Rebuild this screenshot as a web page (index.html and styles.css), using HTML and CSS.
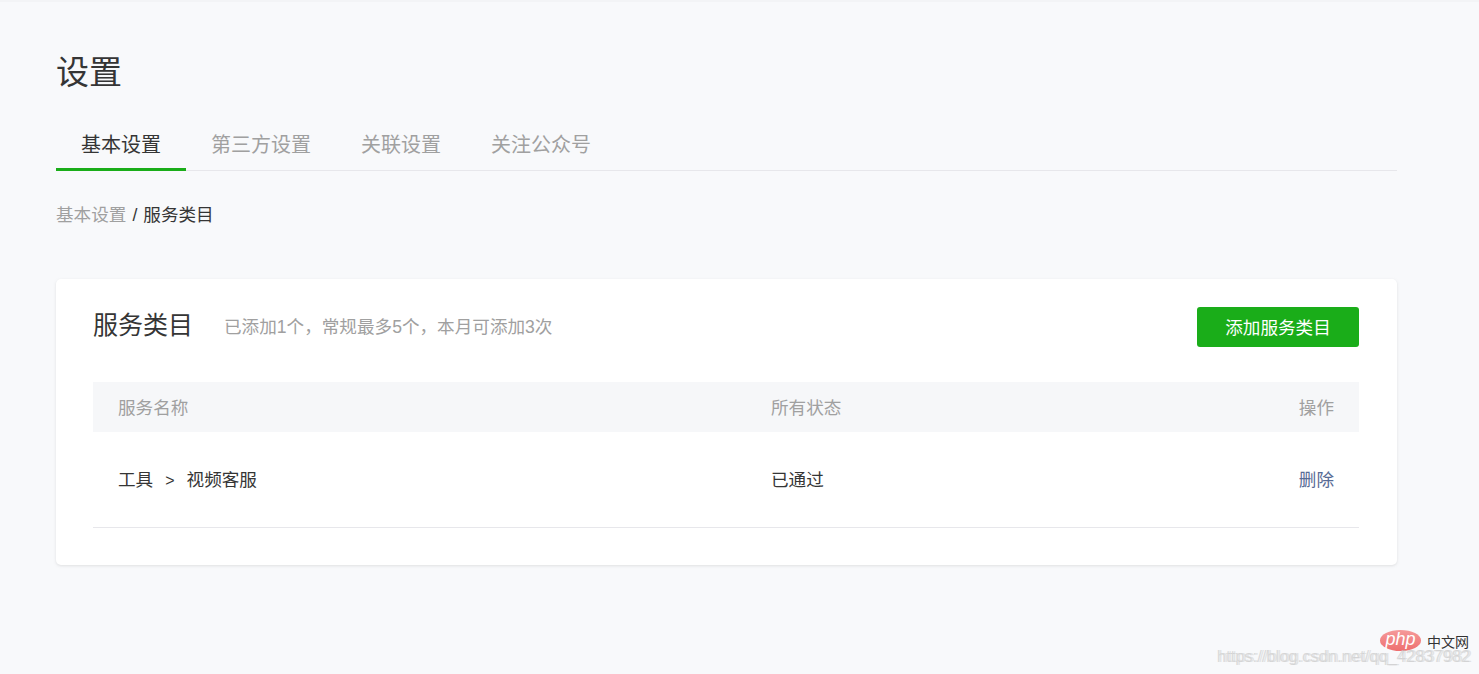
FILE: index.html
```html
<!DOCTYPE html>
<html lang="zh-CN">
  <head>
    <meta charset="UTF-8" />
    <title>设置</title>
    <link rel="stylesheet" href="styles.css">
  </head>

  <body>
    <div class="page">
      <h1 class="title">设置</h1>
      <div class="tabs">
        <a class="tab active">基本设置</a>
        <a class="tab">第三方设置</a>
        <a class="tab">关联设置</a>
        <a class="tab">关注公众号</a>
      </div>
      <div class="crumb"><span class="crumb-link">基本设置</span><span class="crumb-sep">/</span>服务类目</div>

      <div class="card">
        <div class="card-head">
          <h2 class="card-title">服务类目</h2>
          <span class="card-tip">已添加1个，常规最多5个，本月可添加3次</span>
          <button class="btn">添加服务类目</button>
        </div>
        <div class="row row-head">
          <div class="col-name">服务名称</div>
          <div class="col-status">所有状态</div>
          <div class="col-op">操作</div>
        </div>
        <div class="row row-body">
          <div class="col-name">工具<span class="arrow">&gt;</span>视频客服</div>
          <div class="col-status">已通过</div>
          <div class="col-op"><a class="link">删除</a></div>
        </div>
      </div>
    </div>

    <div class="watermark">
      <div class="php-mark">
        <span class="php-logo">php</span>
        <span class="php-cn">中文网</span>
      </div>
      <div class="blog-url">https://blog.csdn.net/qq_42837982</div>
    </div>
  </body>
</html>
```

FILE: styles.css
```css
* {
  box-sizing: border-box;
}

html,
body {
  height: 100%;
}

body {
  margin: 0;
  overflow: hidden;
  background-color: #f8f9fb;
  border-top: 2px solid #f3f4f6;
  font-family: "Liberation Sans", "Noto Sans CJK SC", sans-serif;
  font-size: 17.6px;
  color: #353535;
}

.page {
  width: 1341px;
  margin-left: 56px;
  padding-top: 48px;
}

.title {
  margin: 0;
  font-size: 33px;
  font-weight: normal;
  line-height: 46px;
}

.tabs {
  display: flex;
  height: 50px;
  margin-top: 25px;
  border-bottom: 1px solid #e7e7eb;
}

.tab {
  height: 50px;
  padding: 0 25px;
  font-size: 20px;
  line-height: 48px;
  color: #a0a0a0;
}

.tab.active {
  color: #353535;
  border-bottom: 3px solid #1aad19;
}

.crumb {
  margin-top: 32px;
  line-height: 24px;
}

.crumb-link {
  color: #a0a0a0;
}

.crumb-sep {
  margin: 0 6px;
}

.card {
  height: 286px;
  margin-top: 52px;
  padding: 28px 38px 0 37px;
  background-color: #fff;
  border-radius: 5px;
  box-shadow: 0 1px 3px rgba(150, 150, 150, 0.25);
}

.card-head {
  display: flex;
  align-items: center;
  height: 40px;
}

.card-title {
  margin: 0;
  padding-bottom: 9px;
  font-size: 25px;
  font-weight: normal;
}

.card-tip {
  margin-left: 31px;
  padding-bottom: 4px;
  color: #a0a0a0;
}

.btn {
  width: 162px;
  height: 40px;
  margin-left: auto;
  padding: 0 0 2px;
  border: 0;
  border-radius: 3px;
  background-color: #1aad19;
  color: #fff;
  font-family: inherit;
  font-size: 17.6px;
}

.row {
  display: flex;
  align-items: center;
  padding: 0 25px 2px;
}

.row-head {
  height: 50px;
  margin-top: 35px;
  background-color: #f6f7f9;
  color: #a0a0a0;
}

.row-body {
  height: 96px;
  border-bottom: 1px solid #e7e7eb;
}

.col-name {
  width: 653px;
}

.col-status {
  flex: 1;
}

.col-op {
  text-align: right;
}

.arrow {
  margin: 0 12px;
  font-size: 16px;
}

.link {
  color: #576b95;
}

.watermark {
  position: absolute;
  right: 9px;
  bottom: 8px;
  text-align: right;
}

.php-mark {
  display: flex;
  justify-content: flex-end;
  align-items: center;
  gap: 6px;
  margin-bottom: -5px;
  padding-right: 1px;
}

.php-logo {
  width: 41px;
  height: 21px;
  border-radius: 50%;
  background: linear-gradient(#f59a9a, #ee6f6f);
  color: #fff;
  font-size: 18px;
  font-style: italic;
  line-height: 18px;
  text-align: center;
}

.php-cn {
  font-size: 14px;
  color: #333;
}

.blog-url {
  font-size: 16.5px;
  line-height: 20px;
  white-space: nowrap;
  color: rgba(205, 205, 205, 0.7);
  text-shadow: 2px 0 0 rgba(205, 205, 205, 0.5);
}
```
